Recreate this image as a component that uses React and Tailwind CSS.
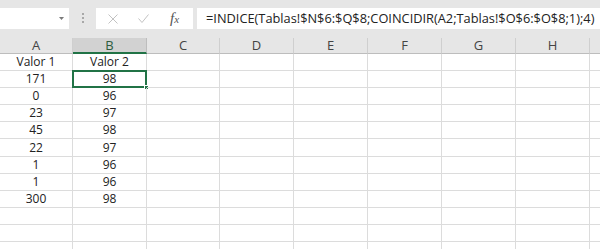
import React from 'react';

const cols = [
  { label: 'A', w: 'w-[73px]' },
  { label: 'B', w: 'w-[74px]' },
  { label: 'C', w: 'w-[73px]' },
  { label: 'D', w: 'w-[74px]' },
  { label: 'E', w: 'w-[74px]' },
  { label: 'F', w: 'w-[74px]' },
  { label: 'G', w: 'w-[74px]' },
  { label: 'H', w: 'w-[74px]' },
  { label: '', w: 'w-[40px]' },
];

const rows = [
  ['Valor 1', 'Valor 2'],
  ['171', '98'],
  ['0', '96'],
  ['23', '97'],
  ['45', '98'],
  ['22', '97'],
  ['1', '96'],
  ['1', '96'],
  ['300', '98'],
  ['', ''],
  ['', ''],
  ['', ''],
];

const FormulaBar = () => (
  <div className="flex h-[38px] items-start bg-[#e6e6e6] pt-[8px]">
    {/* name box */}
    <div className="relative h-[21px] w-[69px] bg-white">
      <svg className="absolute left-[59px] top-[9px]" width="5" height="3" viewBox="0 0 5 3">
        <path d="M0 0h5L2.5 3z" fill="#7a7a7a" />
      </svg>
    </div>
    <div className="flex w-[27px] flex-col items-center gap-[2px] pt-[5px]">
      <span className="h-[2px] w-[2px] bg-[#a8a8a8]" />
      <span className="h-[2px] w-[2px] bg-[#a8a8a8]" />
      <span className="h-[2px] w-[2px] bg-[#a8a8a8]" />
    </div>
    {/* cancel / enter / fx */}
    <div className="flex h-[21px] w-[97px] items-center bg-white">
      <svg className="ml-[12px]" width="10" height="10" viewBox="0 0 10 10">
        <path d="M0.5 0.5l9 9M9.5 0.5l-9 9" stroke="#c2c2c2" strokeWidth="1" fill="none" />
      </svg>
      <svg className="ml-[20px]" width="11" height="9" viewBox="0 0 11 9">
        <path d="M0.5 4.5l3.5 4L10.5 0.5" stroke="#c2c2c2" strokeWidth="1" fill="none" />
      </svg>
      <span className="ml-[21px] font-['Liberation_Serif',serif] text-[15px] italic leading-none text-[#555]">
        f<span className="text-[11px]">x</span>
      </span>
    </div>
    <div className="ml-[4px] flex h-[21px] flex-1 items-center bg-white pl-[9px] font-['Open_Sans',sans-serif] text-[12.8px] text-[#222]">
      =INDICE(Tablas!$N$6:$Q$8;COINCIDIR(A2;Tablas!$O$6:$O$8;1);4)
    </div>
  </div>
);

const HeaderRow = () => (
  <div className="flex h-[16px] bg-[#e6e6e6]">
    {cols.map((c, j) => (
      <div
        key={j}
        className={`${c.w} flex shrink-0 items-center justify-center font-['Open_Sans',sans-serif] text-[13px] leading-none ${
          c.label === 'B'
            ? 'border-b-2 border-r border-b-[#217346] border-r-[#bdbdbd] bg-[#d2d2d2] text-[#2e5c3f]'
            : 'border-b border-r border-b-[#bdbdbd] border-r-[#cfcfcf] text-[#444]'
        }`}
      >
        {c.label}
      </div>
    ))}
  </div>
);

export default function App() {
  return (
    <div className="h-[249px] w-[600px] overflow-hidden bg-white">
      <FormulaBar />
      <HeaderRow />
      {rows.map((r, i) => (
        <div key={i} className="flex h-[17.1px]">
          {cols.map((c, j) => {
            const selected = i === 1 && j === 1;
            return (
              <div
                key={j}
                className={`${c.w} relative flex shrink-0 items-center justify-center border-b border-r border-[#dcdcdc] font-['Open_Sans',sans-serif] text-[12px] leading-none text-[#222]`}
              >
                {j < 2 ? r[j] : ''}
                {selected && (
                  <>
                    <div className="absolute -left-[1px] -top-[1px] bottom-[-1px] right-[-1px] border-2 border-[#217346]" />
                    <div className="absolute -bottom-[3px] -right-[3px] h-[5px] w-[5px] border border-white bg-[#217346]" />
                  </>
                )}
              </div>
            );
          })}
        </div>
      ))}
    </div>
  );
}
